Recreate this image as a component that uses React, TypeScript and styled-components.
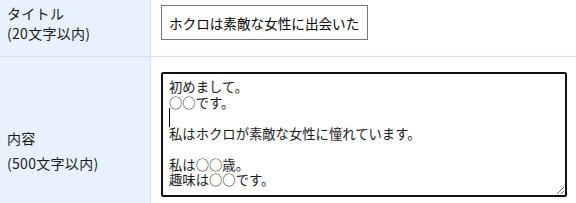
import * as React from "react";
import styled, { createGlobalStyle } from "styled-components";

const GlobalStyle = createGlobalStyle`
    html, body {
        margin: 0;
        padding: 0;
        background: #ffffff;
        font-family: "Noto Sans CJK JP", "Noto Sans", sans-serif;
        color: #1a1a1a;
    }
`;

export default function App(): React.ReactElement {
    return (
        <>
            <GlobalStyle />
            <Form>
                <HeadCell height={56}>
                    <Label lines={20}>
                        <span>タイトル</span>
                        <span>(20文字以内)</span>
                    </Label>
                </HeadCell>
                <BodyCell height={56}>
                    <TitleInput type="text" defaultValue="ホクロは素敵な女性に出会いた" />
                </BodyCell>
                <HeadCell height={160} center>
                    <Label lines={25}>
                        <span>内容</span>
                        <span>(500文字以内)</span>
                    </Label>
                </HeadCell>
                <BodyCell height={160} padTop={15}>
                    <AreaWrap>
                        <Body
                            defaultValue={
                                "初めまして。\n○○です。\n\n私はホクロが素敵な女性に憧れています。\n\n私は○○歳。\n趣味は○○です。"
                            }
                        />
                        <Caret />
                    </AreaWrap>
                </BodyCell>
            </Form>
        </>
    );
}

const Form = styled.div`
    display: grid;
    grid-template-columns: 150px 1fr;
    column-gap: 1px;
    row-gap: 1px;
    background: #cfe4fb;
    width: 576px;
`;

const HeadCell = styled.div<{ height: number; center?: boolean }>`
    height: ${(p) => p.height}px;
    background: #e8f2fe;
    padding: 3px 7px 0;
    box-sizing: border-box;
    display: flex;
    align-items: ${(p) => (p.center ? "center" : "flex-start")};
    padding-top: ${(p) => (p.center ? "27px" : "3px")};
`;

const Label = styled.div<{ lines: number }>`
    display: flex;
    flex-direction: column;
    font-size: 14px;
    line-height: ${(p) => p.lines}px;
    letter-spacing: 0.3px;
    color: #1a1a1a;
`;

const BodyCell = styled.div<{ height: number; padTop?: number }>`
    height: ${(p) => p.height}px;
    background: #ffffff;
    padding: ${(p) => p.padTop ?? 5}px 0 0 10px;
    box-sizing: border-box;
`;

const TitleInput = styled.input`
    box-sizing: border-box;
    width: 207px;
    height: 35px;
    border: 1px solid #767676;
    border-radius: 0;
    padding: 0 7px;
    margin: 0;
    font-family: "Noto Sans CJK JP", sans-serif;
    font-size: 13.6px;
    color: #000;
    background: #fff;
    outline: none;
`;

const AreaWrap = styled.div`
    position: relative;
    width: 406px;
    height: 125px;
`;

const Body = styled.textarea`
    box-sizing: border-box;
    display: block;
    width: 406px;
    height: 125px;
    margin: 0;
    border: 2px solid #111;
    border-radius: 2px;
    padding: 5px 6px;
    font-family: "Noto Sans CJK JP", sans-serif;
    font-size: 13.33px;
    line-height: 15.5px;
    font-variant-east-asian: full-width;
    color: #1a1a1a;
    background: #fff;
    resize: both;
    outline: none;
    overflow: hidden;
`;

const Caret = styled.span`
    position: absolute;
    left: 8px;
    top: 36px;
    width: 1px;
    height: 19px;
    background: #000;
`;
